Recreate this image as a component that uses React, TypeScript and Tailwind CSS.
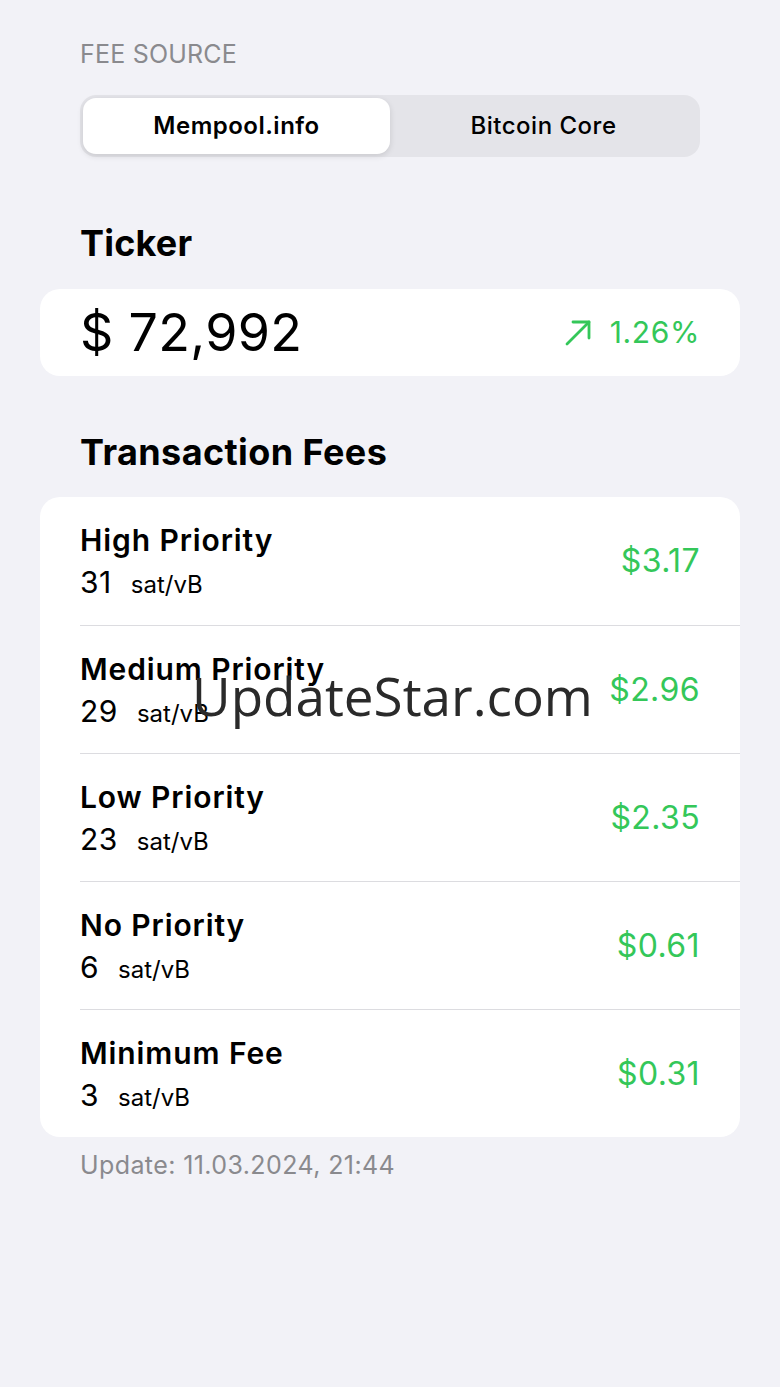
const fees = [
  { name: "High Priority", rate: "31", usd: "$3.17" },
  { name: "Medium Priority", rate: "29", usd: "$2.96" },
  { name: "Low Priority", rate: "23", usd: "$2.35" },
  { name: "No Priority", rate: "6", usd: "$0.61" },
  { name: "Minimum Fee", rate: "3", usd: "$0.31" },
];

const TrendUp = () => (
  <svg width="28" height="28" viewBox="0 0 28 28" fill="none" stroke="currentColor" strokeWidth="2.8" strokeLinecap="round" strokeLinejoin="round">
    <path d="M3 25 L25 3" />
    <path d="M9 3 H25 V19" />
  </svg>
);

const App = () => {
  return (
    <div
      className="relative min-h-[1387px] w-[780px] bg-[#f2f2f7] text-black"
      style={{ fontFamily: "Inter, 'Noto Sans', sans-serif" }}
    >
      <div className="px-10 pt-[38px]">
        <div className="px-10 text-[25px] leading-[32px] tracking-[0.2px] text-[#8a8a8e]">FEE SOURCE</div>

        <div className="mx-10 mt-[25px] flex h-[62px] rounded-[16px] bg-[#e4e4e9] p-[3px]">
          <div className="flex flex-1 items-center justify-center rounded-[13px] bg-white text-[24px] font-semibold tracking-[0.5px] shadow-[0_2px_6px_rgba(0,0,0,0.12)]">
            Mempool.info
          </div>
          <div className="flex flex-1 items-center justify-center text-[24px] font-medium tracking-[0.5px]">
            Bitcoin Core
          </div>
        </div>

        <div className="mt-[62px] px-10 text-[36px] font-bold leading-[48px] tracking-[0.2px]">Ticker</div>

        <div className="mt-[22px] flex h-[87px] items-center justify-between rounded-[20px] bg-white px-10">
          <div className="text-[52px] leading-none tracking-[0.3px]">$ 72,992</div>
          <div className="flex items-center gap-[18px] text-[30px] tracking-[0.6px] text-[#34c759]">
            <TrendUp />
            <span>1.26%</span>
          </div>
        </div>

        <div className="mt-[52px] px-10 text-[36px] font-bold leading-[48px] tracking-[0.4px]">Transaction Fees</div>

        <div className="mt-[21px] overflow-hidden rounded-[20px] bg-white pl-10">
          {fees.map((f, i) => (
            <div
              key={f.name}
              className={`flex h-[128px] items-center justify-between pr-10 ${i > 0 ? "border-t border-[#dcdce0]" : ""}`}
            >
              <div className="flex flex-col">
                <div className="text-[30px] font-semibold leading-[40px] tracking-[0.9px]">{f.name}</div>
                <div className="mt-[2px] flex items-baseline gap-[19px]">
                  <span className="text-[30px] leading-[40px] tracking-[0.5px]">{f.rate}</span>
                  <span className="text-[24px] leading-[32px]">sat/vB</span>
                </div>
              </div>
              <div className="text-[32px] tracking-[0.4px] text-[#34c759]">{f.usd}</div>
            </div>
          ))}
        </div>

        <div className="mt-[12px] px-10 text-[25px] leading-[32px] tracking-[0.4px] text-[#8a8a8e]">
          Update: 11.03.2024, 21:44
        </div>
      </div>

      <div
        className="pointer-events-none absolute left-[192px] top-[664px] text-[53px] leading-[64px] text-[#2a2a2a]"
        style={{ fontFamily: "'Open Sans', sans-serif" }}
      >
        UpdateStar.com
      </div>
    </div>
  );
};

export default App;
